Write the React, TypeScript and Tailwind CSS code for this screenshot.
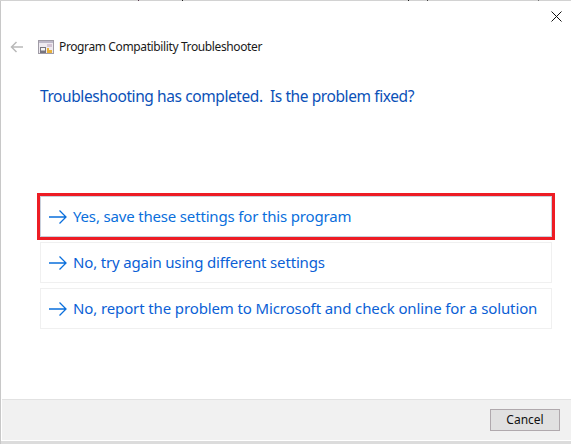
import React from 'react';

const font = { fontFamily: '"Noto Sans", "Open Sans", sans-serif' };

const ArrowIcon = () => (
  <svg width="20" height="16" viewBox="0 0 20 16" fill="none" stroke="#0a6fdc" strokeWidth="1.3" className="shrink-0">
    <path d="M1 8h17M11.5 1.5 18 8l-6.500 6.500" />
  </svg>
);

const ProgramIcon = () => (
  <svg width="16" height="16" viewBox="0 0 16 16" className="shrink-0">
    <rect x="0.5" y="1.500" width="15" height="13" fill="#eeeaf0" stroke="#a09ca6" />
    <rect x="1" y="2" width="14" height="2" fill="#bdb8c8" />
    <rect x="9" y="5" width="5" height="3" fill="#d3c3d3" />
    <rect x="2" y="8" width="6" height="6" fill="#77747e" />
    <rect x="3" y="9" width="4" height="2.500" fill="#f4f4f4" />
    <path d="M9 14V9h2v5zM11 14v-3h3v3z" fill="#e8b13a" />
  </svg>
);

const options = [
  'Yes, save these settings for this program',
  'No, try again using different settings',
  'No, report the problem to Microsoft and check online for a solution',
];

export default function App() {
  return (
    <div className="h-[444px] w-[571px] flex flex-col bg-white overflow-hidden" style={font}>
      {/* Edge of the window behind */}
      <div className="h-px shrink-0 flex bg-[#d2d2d2]">
        <div className="w-[138px]" />
        <div className="w-px bg-[#5a3a50]" />
        <div className="w-[43px]" />
        <div className="w-px bg-[#222]" />
        <div className="w-[225px]" />
        <div className="w-px bg-[#222]" />
        <div className="w-[18px]" />
        <div className="w-px bg-[#444]" />
        <div className="w-[110px]" />
        <div className="w-px bg-[#777]" />
      </div>
      <div className="flex-1 flex flex-col border-l border-l-[#c8c8c8]">
        {/* Title row */}
        <div className="flex justify-end h-[31px] pt-[10px] pr-[9px]">
          <svg width="11" height="11" viewBox="0 0 11 11" stroke="#111" strokeWidth="1" fill="none">
            <path d="M.5.5l10 10M10.500.5l-10 10" />
          </svg>
        </div>
        <div className="flex items-center h-[29px] pl-[9px]">
          <svg width="14" height="12" viewBox="0 0 14 12" fill="none" stroke="#b9b9b9" strokeWidth="1.500" className="mr-[14px]">
            <path d="M13 6H1.500M6.500 1l-5 5 5 5" />
          </svg>
          <ProgramIcon />
          <span className="ml-[5px] text-[12px] text-[#1a1a1a] tracking-[-0.38px]">Program Compatibility Troubleshooter</span>
        </div>

        <h1 className="ml-[39px] mt-[24px] text-[15.500px] leading-[22px] text-[#0b51b8] font-normal whitespace-pre tracking-[-0.41px]">
          Troubleshooting has completed.  Is the problem fixed?
        </h1>

        <div className="mt-[86px] ml-[36px] w-[518px] flex flex-col">
          <div className="border-[3px] border-[#ed1c24] h-[47px]">
            <div className="h-full border border-[#c9d0dc] flex items-center pl-[7px] gap-[5px] text-[15px] text-[#0a6fdc] tracking-[-0.17px]">
              <ArrowIcon />
              <span className="whitespace-nowrap">{options[0]}</span>
            </div>
          </div>
          {options.slice(1).map((label, i) => (
            <div
              key={label}
              className={`mx-[3px] h-[41px] border border-[#f0f0f0] flex items-center pl-[7px] gap-[5px] text-[15px] text-[#0b5fd6] ${i === 0 ? 'mt-[2px] tracking-[-0.17px]' : 'mt-[5px] tracking-[-0.12px]'}`}
            >
              <ArrowIcon />
              <span className="whitespace-nowrap">{label}</span>
            </div>
          ))}
        </div>

        <div className="flex-1" />

        {/* Footer */}
        <div className="h-[41px] ml-px bg-[#f1f1f1] border-t border-t-[#e2e2e2] flex justify-end items-start pt-[9px] pr-[11px]">
          <button className="w-[70px] h-[22px] bg-[#e1e1e1] border border-[#b0a9ad] text-[12px] text-[#111]">
            Cancel
          </button>
        </div>
        <div className="h-px bg-white" />
        <div className="h-[3px] bg-[#dcdcdc]" />
      </div>
    </div>
  );
}
